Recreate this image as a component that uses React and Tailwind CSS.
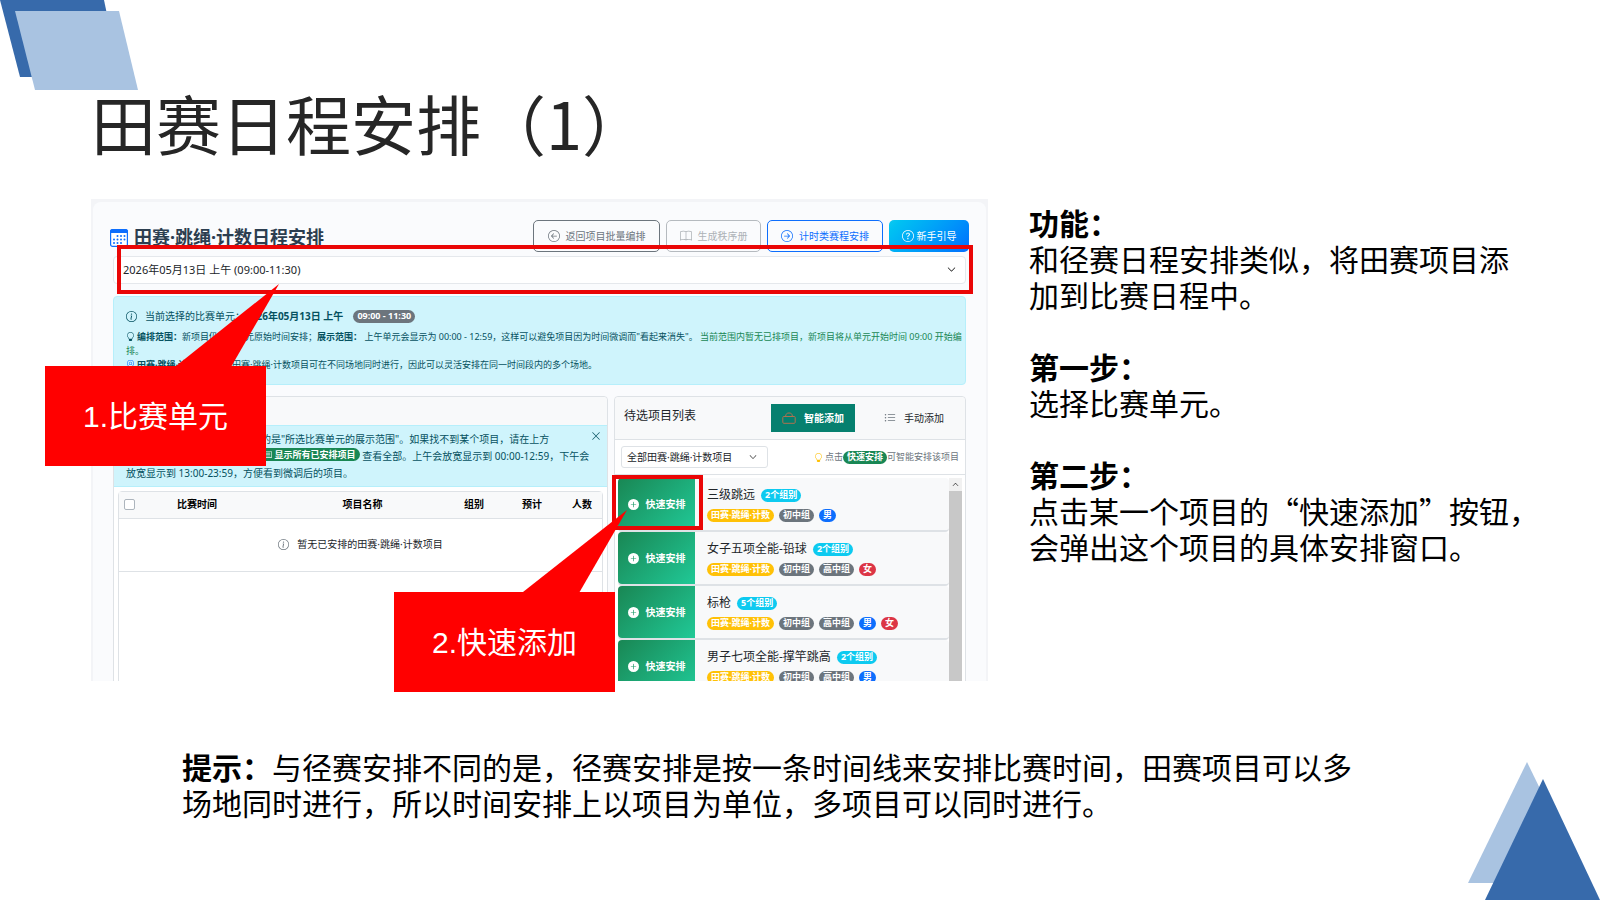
import React, { useState } from 'react';
import {
  BsArrowLeftCircle,
  BsArrowRightCircle,
  BsBook,
  BsCardList,
  BsChevronDown,
  BsGeoAlt,
  BsInfoCircle,
  BsLightbulb,
  BsListUl,
  BsPlusCircleFill,
  BsQuestionCircle,
  BsXLg
} from 'react-icons/bs';

const units = ['2026年05月13日 上午 (09:00-11:30)'];
const filters = ['全部田赛·跳绳·计数项目'];

const events = [
  { name: '三级跳远', groups: 2, tags: ['初中组', '男'] },
  { name: '女子五项全能-铅球', groups: 2, tags: ['初中组', '高中组', '女'] },
  { name: '标枪', groups: 5, tags: ['初中组', '高中组', '男', '女'] },
  { name: '男子七项全能-撑竿跳高', groups: 2, tags: ['初中组', '高中组', '男'] }
];

const tagColors = {
  初中组: 'bg-[#6c757d]',
  高中组: 'bg-[#6c757d]',
  男: 'bg-[#0d6efd]',
  女: 'bg-[#dc3545]'
};

const Badge = ({ color, children }) => (
  <span className={`inline-flex items-center h-[13px] px-1 rounded-full text-[9px] font-bold text-white whitespace-nowrap ${color}`}>
    {children}
  </span>
);

const CornerTop = () => (
  <svg className="absolute left-0 top-0" width="140" height="92" viewBox="0 0 140 92" aria-hidden="true">
    <path d="M0 0H104L120 77H20L0 0Z" fill="#376aab" />
    <path d="M15 11H119L138 90H35Z" fill="#a9c3e1" />
  </svg>
);

const CornerBottom = () => (
  <svg className="absolute right-0 bottom-0" width="132" height="138" viewBox="0 0 132 138" aria-hidden="true">
    <path d="M59 0L118 121H0Z" fill="#a9c3e1" />
    <path d="M75 17L132 138H17Z" fill="#376aab" />
  </svg>
);

const CalendarIcon = () => (
  <svg className="w-[18px] h-[18px]" viewBox="0 0 18 18" fill="#0d6efd" aria-hidden="true">
    <rect x="0.600" y="0.600" width="16.800" height="16.800" rx="2" fill="#fff" stroke="#0d6efd" strokeWidth="1.200" />
    <path d="M2.500 0H15.500A2.500 2.500 0 0 1 18 2.500V4H0V2.500A2.500 2.500 0 0 1 2.500 0Z" />
    <circle cx="7.500" cy="7" r="1" />
    <circle cx="11" cy="7" r="1" />
    <circle cx="14.500" cy="7" r="1" />
    <circle cx="4" cy="10.500" r="1" />
    <circle cx="7.500" cy="10.500" r="1" />
    <circle cx="11" cy="10.500" r="1" />
    <circle cx="14.500" cy="10.500" r="1" />
    <circle cx="4" cy="14" r="1" />
    <circle cx="7.500" cy="14" r="1" />
    <circle cx="11" cy="14" r="1" />
  </svg>
);

const Toolbar = () => (
  <div className="flex items-start justify-between pl-[17px] pr-[17px] pt-[18px]">
    <h2 className="flex items-center gap-[6px] h-[35px] text-[18px] font-bold text-[#2c3e50]">
      <CalendarIcon />
      田赛·跳绳·计数日程安排
    </h2>
    <div className="flex gap-[6px] h-9 text-[10px]">
      <button className="flex items-center justify-center gap-[6px] w-[127px] h-8 rounded-[5px] border border-[#6c757d] text-[#6c757d]">
        <BsArrowLeftCircle className="w-3 h-3" />
        返回项目批量编排
      </button>
      <button className="flex items-center justify-center gap-[6px] w-[95px] h-8 rounded-[5px] border border-[#b5babf] text-[#adb2b7]" disabled>
        <BsBook className="w-3 h-3" />
        生成秩序册
      </button>
      <button className="flex items-center justify-center gap-[6px] w-[116px] h-8 rounded-[5px] border border-[#0d6efd] text-[#0d6efd]">
        <BsArrowRightCircle className="w-3 h-3" />
        计时类赛程安排
      </button>
      <button className="flex items-center justify-center gap-[3px] w-20 h-8 rounded-[5px] bg-linear-135 from-[#0dcaf0] to-[#0d6efd] text-white">
        <BsQuestionCircle className="w-3 h-3" />
        新手引导
      </button>
    </div>
  </div>
);

const UnitInfo = () => (
  <div className="mt-3 h-[89px] px-3 pt-[10px] rounded-[4px] border border-[#b6effb] bg-[#cff4fc] text-[#055160] text-[9px] leading-[14px] whitespace-nowrap">
    <div className="flex items-center h-[18px] text-[10px]">
      <BsInfoCircle className="w-[11px] h-[11px] mr-2" />
      当前选择的比赛单元：
      <strong className="mr-[10px]">2026年05月13日 上午</strong>
      <Badge color="bg-[#6c757d]">09:00 - 11:30</Badge>
    </div>
    <p className="mt-[5px]">
      <BsLightbulb className="inline w-[9px] h-[9px] mr-[2px] align-[-1px]" />
      <strong>编排范围：</strong>新项目仍按该单元原始时间安排；<strong>展示范围：</strong>
      {' '}上午单元会显示为 00:00 - 12:59，这样可以避免项目因为时间微调而"看起来消失"。
      {' '}<span className="text-[#198754]">当前范围内暂无已排项目，新项目将从单元开始时间 09:00 开始编<br />排。</span>
    </p>
    <p>
      <BsGeoAlt className="inline w-[9px] h-[9px] mr-[2px] align-[-1px] text-[#0d6efd]" />
      <strong>田赛·跳绳·计数灵活性：</strong>田赛·跳绳·计数项目可在不同场地同时进行，因此可以灵活安排在同一时间段内的多个场地。
    </p>
  </div>
);

const ScheduledPanel = () => {
  const [showTip, setShowTip] = useState(true);

  return (
    <section className="flex-1 min-w-0 rounded-t-[4px] border border-[#dee2e6] bg-white">
      <div className="h-7 rounded-t-[4px] bg-[#f8f9fa]"></div>
      {showTip && (
        <div className="relative px-3 pt-[5px] pb-1 border-y border-[#b6effb] bg-[#cff4fc] text-[#055160] text-[10px] leading-[17px] whitespace-nowrap">
          <p>
            <BsInfoCircle className="inline w-[11px] h-[11px] mr-1 align-[-1px]" />
            <strong>提示：</strong>当前列表默认仅展示的是"所选比赛单元的展示范围"。如果找不到某个项目，请在上方
            <br />
            点击右侧工具栏中的快捷按钮{' '}
            <span className="inline-flex items-center gap-[3px] h-[13px] px-1 rounded-full bg-[#198754] text-[9px] font-bold text-white align-[1px]">
              <BsCardList className="w-[9px] h-[9px]" />
              显示所有已安排项目
            </span>
            {' '}查看全部。上午会放宽显示到 00:00-12:59，下午会
            <br />
            放宽显示到 13:00-23:59，方便看到微调后的项目。
          </p>
          <button className="absolute right-[6px] top-[5px]" aria-label="关闭" onClick={() => setShowTip(false)}>
            <BsXLg className="w-[10px] h-[10px]" />
          </button>
        </div>
      )}
      <div className="mx-1 mt-1 h-60 rounded-t-[4px] border border-[#dee2e6]">
        <table className="w-full table-fixed text-[10px] text-[#212529]">
          <colgroup>
            <col className="w-6" />
            <col className="w-[108px]" />
            <col />
            <col className="w-14" />
            <col className="w-[60px]" />
            <col className="w-10" />
          </colgroup>
          <thead>
            <tr className="h-[26px] border-b border-[#dee2e6] bg-[#f8f9fa] text-black">
              <th className="pl-[5px] text-left">
                <input type="checkbox" aria-label="全选" className="block w-[11px] h-[11px] appearance-none rounded-[2px] border border-[#adb5bd] bg-white" />
              </th>
              <th>比赛时间</th>
              <th className="pl-7">项目名称</th>
              <th>组别</th>
              <th>预计</th>
              <th>人数</th>
            </tr>
          </thead>
          <tbody>
            <tr className="h-[53px] border-b border-[#dee2e6]">
              <td colSpan={6}>
                <div className="flex items-center justify-center gap-2">
                  <BsInfoCircle className="w-[11px] h-[11px] text-[#6c757d]" />
                  暂无已安排的田赛·跳绳·计数项目
                </div>
              </td>
            </tr>
          </tbody>
        </table>
      </div>
    </section>
  );
};

const EventRow = ({ event }) => (
  <li className="flex h-[54px] border-b-2 border-[#dee2e6] rounded-[4px] bg-[#f8f9fa]">
    <button className="flex items-center justify-center gap-[7px] w-[77px] rounded-l-[4px] bg-linear-135 from-[#198754] to-[#20c997] text-[10px] font-bold text-white">
      <BsPlusCircleFill className="w-[11px] h-[11px]" />
      快速安排
    </button>
    <div className="flex-1 pl-3 pt-[7px]">
      <div className="flex items-center gap-[6px] h-5 text-[12px] text-[#212529]">
        {event.name}
        <Badge color="bg-[#0dcaf0]">{event.groups}个组别</Badge>
      </div>
      <div className="flex items-center gap-[5px] h-5">
        <Badge color="bg-[#ffc107]">田赛·跳绳·计数</Badge>
        {event.tags.map((tag) => (
          <Badge key={tag} color={tagColors[tag]}>{tag}</Badge>
        ))}
      </div>
    </div>
  </li>
);

const CandidatePanel = () => (
  <section className="w-[352px] rounded-t-[4px] border border-[#dee2e6] bg-white">
    <div className="flex h-[43px] rounded-t-[4px] border-b border-[#dee2e6] bg-[#f8f9fa] pl-[9px] pr-[21px]">
      <h3 className="flex-1 pt-[9px] text-[12px] leading-5 text-[#212529]">待选项目列表</h3>
      <button className="flex items-center justify-center gap-2 w-[84px] h-7 mt-[7px] bg-[#06806f] text-[10px] font-bold text-white">
        <svg className="w-[14px] h-3" viewBox="0 0 14 12" fill="none" stroke="#b0714f" aria-hidden="true">
          <path d="M3.500 4.500C4 1.500 5 1 7 1S10 1.500 10.500 4.500" />
          <rect x="0.800" y="4.500" width="12.400" height="6.800" rx="1" />
        </svg>
        智能添加
      </button>
      <button className="flex items-center gap-2 h-7 mt-[7px] ml-[29px] text-[10px] text-[#212529]">
        <BsListUl className="w-3 h-3 text-[#6c757d]" />
        手动添加
      </button>
    </div>
    <div className="flex items-center justify-between h-[35px] px-[6px] border-b border-[#dee2e6]">
      <div className="relative w-[147px]">
        <select aria-label="项目筛选" className="block w-full h-[22px] pl-[5px] appearance-none rounded-[3px] border border-[#dee2e6] bg-white text-[10px] text-[#212529]">
          {filters.map((filter) => <option key={filter}>{filter}</option>)}
        </select>
        <BsChevronDown className="absolute right-[11px] top-[7px] w-2 h-2 pointer-events-none" />
      </div>
      <div className="flex items-center text-[9px] text-[#6c757d]">
        <BsLightbulb className="w-[9px] h-[9px] mr-[2px] text-[#ffc107]" />
        点击
        <Badge color="bg-[#198754]">快速安排</Badge>
        可智能安排该项目
      </div>
    </div>
    <div className="flex pl-[3px] pr-[3px] pt-[3px]">
      <ul className="flex-1">
        {events.map((event) => (
          <EventRow key={event.name} event={event} />
        ))}
      </ul>
      <div className="w-[13px] bg-[#c8c8c8]">
        <div className="flex items-center justify-center h-[13px] bg-[#f1f1f1]">
          <BsChevronDown className="w-[7px] h-[7px] rotate-180" />
        </div>
      </div>
    </div>
  </section>
);

const Schedule = () => (
  <div className="h-[482px] overflow-hidden bg-[#f3f4f7]">
    <div className="h-[500px] mt-[3px] mx-[2px] rounded-t-[8px] bg-[#fafbfd]">
      <Toolbar />
      <div className="px-5">
        <div className="relative">
          <select aria-label="比赛单元" className="block w-full h-7 pl-[9px] appearance-none rounded-[4px] border border-[#e5e8ec] bg-white text-[11px] text-[#212529]">
            {units.map((unit) => <option key={unit}>{unit}</option>)}
          </select>
          <BsChevronDown className="absolute right-[10px] top-[9px] w-[9px] h-[9px] pointer-events-none" />
        </div>
        <UnitInfo />
        <div className="flex gap-[6px] mt-[11px]">
          <ScheduledPanel />
          <CandidatePanel />
        </div>
      </div>
    </div>
  </div>
);

const App = () => {
  return (
    <div lang="zh-CN" className="relative min-h-screen overflow-hidden bg-white font-['Noto_Sans','Noto_Sans_CJK_SC',sans-serif]">
      <CornerTop />
      <CornerBottom />

      <h1 className="relative pl-[91px] pt-[74px] text-[65px] leading-[96px] text-[#262626] font-['Noto_Sans_CJK_SC',sans-serif]">
        田赛日程安排（1）
      </h1>

      <main className="flex gap-[41px] pl-[91px] pr-[41px] mt-[29px]">
        <div className="relative flex-1 min-w-0">
          <Schedule />

          {/* highlight frames */}
          <div className="absolute left-[26px] right-[15px] top-[46px] h-[49px] border-4 border-[#ea0606] pointer-events-none"></div>
          <div className="absolute right-[285px] top-[276px] w-[91px] h-[55px] border-4 border-[#ea0606] pointer-events-none"></div>

          {/* callouts */}
          <div className="absolute left-[-46px] top-[167px] flex items-center justify-center w-[221px] h-[100px] bg-[#ff0000] text-[30px] text-white font-['Liberation_Sans','Noto_Sans_CJK_SC',sans-serif]">
            <svg className="absolute left-[131px] top-[-82px]" width="104" height="83" viewBox="0 0 104 83" aria-hidden="true">
              <path d="M103 0L55 83H0V82Z" fill="#ff0000" />
            </svg>
            1.比赛单元
          </div>
          <div className="absolute right-[373px] top-[393px] flex items-center justify-center w-[221px] h-[100px] bg-[#ff0000] text-[30px] text-white font-['Liberation_Sans','Noto_Sans_CJK_SC',sans-serif]">
            <svg className="absolute left-[129px] top-[-82px]" width="104" height="83" viewBox="0 0 104 83" aria-hidden="true">
              <path d="M104 0L56 83H0V82Z" fill="#ff0000" />
            </svg>
            2.快速添加
          </div>
        </div>

        <aside className="w-[530px] pt-[5px] text-[30px] leading-9 text-black font-['Noto_Sans_CJK_SC',sans-serif]">
          <h2 className="font-bold">功能：</h2>
          <p>和径赛日程安排类似，将田赛项目添<br />加到比赛日程中。</p>
          <h2 className="mt-9 font-bold">第一步：</h2>
          <p>选择比赛单元。</p>
          <h2 className="mt-9 font-bold">第二步：</h2>
          <p>点击某一个项目的“快速添加”按钮，<br />会弹出这个项目的具体安排窗口。</p>
        </aside>
      </main>

      <p className="relative max-w-[1372px] mt-[67px] pl-[182px] text-[30px] leading-9 text-black font-['Noto_Sans_CJK_SC',sans-serif]">
        <strong className="font-bold">提示：</strong>与径赛安排不同的是，径赛安排是按一条时间线来安排比赛时间，田赛项目可以多场地同时进行，所以时间安排上以项目为单位，多项目可以同时进行。
      </p>
    </div>
  );
};

export default App;
